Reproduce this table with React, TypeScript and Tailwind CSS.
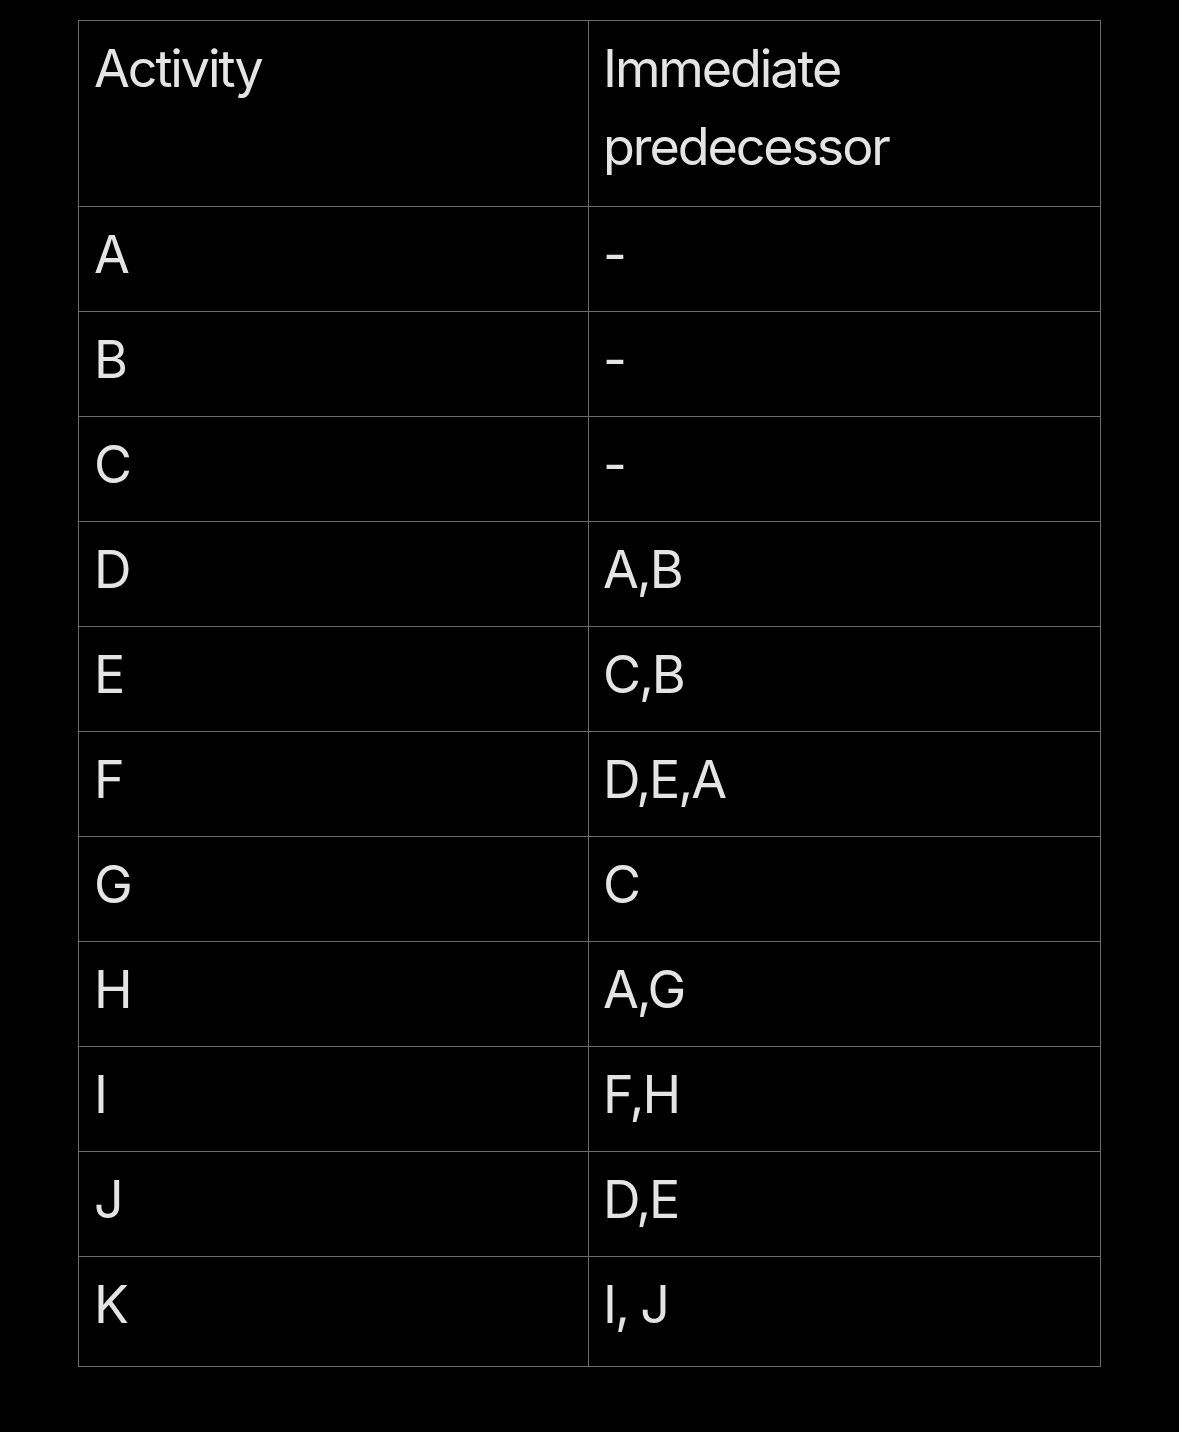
const ROWS: [string, string][] = [
  ['A', '-'],
  ['B', '-'],
  ['C', '-'],
  ['D', 'A,B'],
  ['E', 'C,B'],
  ['F', 'D,E,A'],
  ['G', 'C'],
  ['H', 'A,G'],
  ['I', 'F,H'],
  ['J', 'D,E'],
  ['K', 'I, J'],
];

export default function App() {
  return (
    <div className="min-h-[1432px] w-full bg-black pl-[78px] pt-[20px] font-['Inter','Noto_Sans',sans-serif] text-[52px] leading-[78px] tracking-[-0.04em] text-[#e4e4e4]">
      <table className="w-[1022px] table-fixed border-collapse border border-[#6b6b6b]">
        <colgroup>
          <col className="w-[510px]" />
          <col className="w-[512px]" />
        </colgroup>
        <thead>
          <tr>
            <th className="h-[186px] border border-[#6b6b6b] px-[15px] pb-[20px] pt-[9px] text-left align-top font-normal">
              Activity
            </th>
            <th className="h-[186px] border border-[#6b6b6b] px-[14px] pb-[20px] pt-[9px] text-left align-top font-normal">
              Immediate predecessor
            </th>
          </tr>
        </thead>
        <tbody>
          {ROWS.map(([activity, pred], i) => {
            const last = i === ROWS.length - 1;
            return (
              <tr key={activity}>
                <td
                  className={`${last ? 'h-[110px]' : 'h-[105px]'} border border-[#6b6b6b] px-[15px] pt-[9px] align-top`}
                >
                  {activity}
                </td>
                <td
                  className={`${last ? 'h-[110px]' : 'h-[105px]'} border border-[#6b6b6b] px-[14px] pt-[9px] align-top`}
                >
                  {pred}
                </td>
              </tr>
            );
          })}
        </tbody>
      </table>
    </div>
  );
}
